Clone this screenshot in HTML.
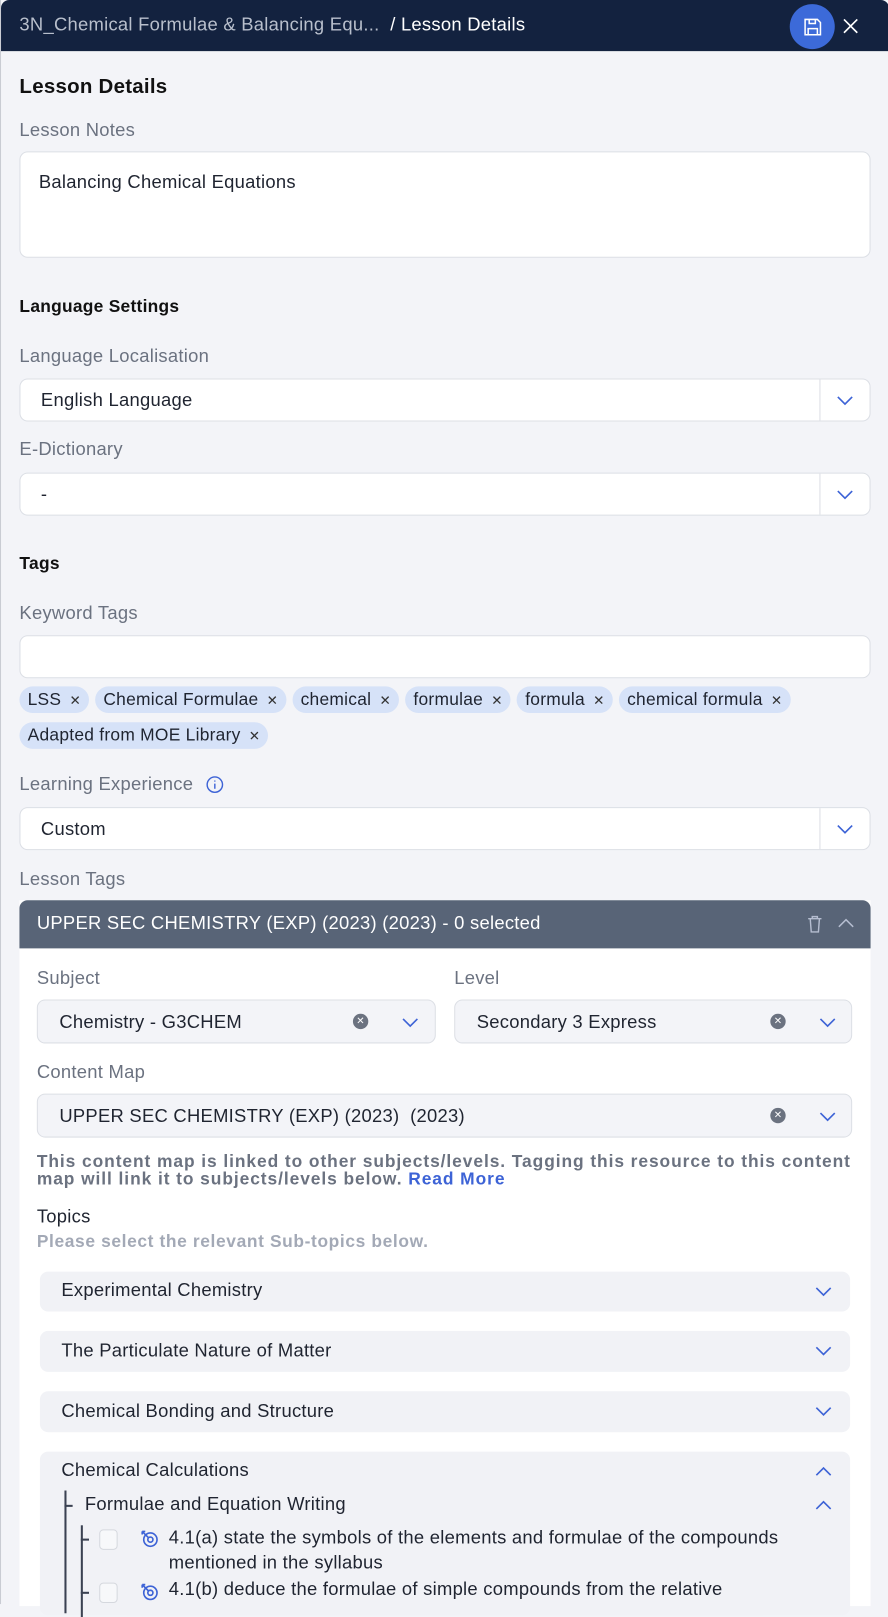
<!DOCTYPE html>
<html><head><meta charset="utf-8"><style>
*{box-sizing:border-box;margin:0;padding:0}
html,body{width:888px;height:1604px;overflow:hidden;background:#f3f4f8}
#w{position:absolute;left:0;top:0;width:868px;height:1568px;transform:scale(1.023);transform-origin:0 0;font-family:"Liberation Sans",sans-serif;color:#1f2430;background:#f3f4f8;border-left:1px solid #c9ccd3;letter-spacing:0.25px}
.a{position:absolute;white-space:nowrap}
.lbl{font-size:18px;color:#6b7280}
.b{font-weight:bold;font-size:17px;color:#111}
.box{position:absolute;background:#fff;border:1px solid #dcdfe5;border-radius:8px}
.sel{position:absolute;background:#fff;border:1px solid #dcdfe5;border-radius:8px;height:42px;font-size:18px}
.sel span{position:absolute;left:20px;top:10px}
.sel .dv{position:absolute;right:48px;top:0;bottom:0;width:1px;background:#dcdfe5}
.chev{position:absolute;width:18px;height:10px}
.chip{display:inline-block;background:#d6e2f8;border-radius:13px;height:26px;line-height:26px;padding:0 8px;font-size:17px;color:#1f2430;margin-right:6px;margin-bottom:9px}
.chip i{font-style:normal;font-size:13px;margin-left:8px;color:#333}
.ss{position:absolute;background:#f3f4f8;border:1px solid #dcdfe5;border-radius:8px;height:43px;font-size:18px}
.ss span{position:absolute;left:21px;top:11px}
.clr{position:absolute;width:15px;height:15px;border-radius:50%;background:#6b7280;color:#fff;font-size:10px;line-height:15px;text-align:center;top:13px;letter-spacing:0}
.topic{position:absolute;left:38px;width:792px;background:#f1f2f6;border-radius:8px;font-size:18px}
</style></head><body><div id="w">
<div class="a" style="left:0;top:0;width:868px;height:50px;background:#13223f;border-radius:8px 8px 0 0"></div>
<div class="a" style="left:18px;top:14px;font-size:18px;color:#b8bfcc">3N_Chemical Formulae &amp; Balancing Equ... <span style="color:#fff">&nbsp;/ Lesson Details</span></div>
<div class="a" style="left:771px;top:4px;width:44px;height:44px;border-radius:50%;background:#3c6ad9"></div>
<svg class="a" style="left:783px;top:16px" width="21" height="21" viewBox="0 0 21 21" fill="none" stroke="#fff" stroke-width="1.5"><path d="M3 3h12l3 3v12H3z"/><path d="M7 3v4h6V3M6 18v-6h9v6"/></svg>
<svg class="a" style="left:822px;top:17px" width="17" height="17" stroke="#fff" stroke-width="1.6"><path d="M2 2l13 13M15 2L2 15"/></svg>

<div class="a" style="left:18px;top:74px;font-size:20px;font-weight:bold;color:#111">Lesson Details</div>
<div class="a lbl" style="left:18px;top:117px">Lesson Notes</div>
<div class="box" style="left:18px;top:148px;width:832px;height:104px"></div>
<div class="a" style="left:37px;top:168px;font-size:18px">Balancing Chemical Equations</div>

<div class="a b" style="left:18px;top:290px">Language Settings</div>
<div class="a lbl" style="left:18px;top:338px">Language Localisation</div>
<div class="sel" style="left:18px;top:370px;width:832px"><span>English Language</span><div class="dv"></div><svg class="chev" style="right:15px;top:16px" viewBox="0 0 18 10" fill="none" stroke="#3d63d6" stroke-width="1.6"><path d="M2 1l7 7 7-7"/></svg></div>
<div class="a lbl" style="left:18px;top:429px">E-Dictionary</div>
<div class="sel" style="left:18px;top:462px;width:832px"><span>-</span><div class="dv"></div><svg class="chev" style="right:15px;top:16px" viewBox="0 0 18 10" fill="none" stroke="#3d63d6" stroke-width="1.6"><path d="M2 1l7 7 7-7"/></svg></div>

<div class="a b" style="left:18px;top:541px">Tags</div>
<div class="a lbl" style="left:18px;top:589px">Keyword Tags</div>
<div class="box" style="left:18px;top:621px;width:832px;height:42px"></div>
<div class="a" style="left:18px;top:671px;width:830px;white-space:normal">
<span class="chip">LSS<i>✕</i></span><span class="chip">Chemical Formulae<i>✕</i></span><span class="chip">chemical<i>✕</i></span><span class="chip">formulae<i>✕</i></span><span class="chip">formula<i>✕</i></span><span class="chip">chemical formula<i>✕</i></span><br><span class="chip">Adapted from MOE Library<i>✕</i></span></div>

<div class="a lbl" style="left:18px;top:756px">Learning Experience</div>
<svg class="a" style="left:200px;top:758px" width="18" height="18" fill="none" stroke="#3d63d6" stroke-width="1.4"><circle cx="9" cy="9" r="7.5"/><path d="M9 8v5M9 5v1"/></svg>
<div class="sel" style="left:18px;top:789px;width:832px"><span>Custom</span><div class="dv"></div><svg class="chev" style="right:15px;top:16px" viewBox="0 0 18 10" fill="none" stroke="#3d63d6" stroke-width="1.6"><path d="M2 1l7 7 7-7"/></svg></div>
<div class="a lbl" style="left:18px;top:849px">Lesson Tags</div>

<div class="a" style="left:18px;top:880px;width:832px;height:690px;background:#fff"></div>
<div class="a" style="left:18px;top:880px;width:832px;height:47px;background:#586477;border-radius:8px 8px 0 0"></div>
<div class="a" style="left:35px;top:892px;font-size:18px;color:#fff">UPPER SEC CHEMISTRY (EXP) (2023) (2023) - 0 selected</div>
<svg class="a" style="left:787px;top:894px" width="17" height="19" fill="none" stroke="#b5bdd0" stroke-width="1.4"><path d="M2 4h13M6 4V2h5v2M4 4l1 13h7l1-13"/></svg>
<svg class="a" style="left:818px;top:897px" width="16" height="10" fill="none" stroke="#b5bdd0" stroke-width="1.5"><path d="M1 9l7-7 7 7"/></svg>

<div class="a lbl" style="left:35px;top:946px">Subject</div>
<div class="a lbl" style="left:443px;top:946px">Level</div>
<div class="ss" style="left:35px;top:977px;width:390px"><span>Chemistry - G3CHEM</span><div class="clr" style="left:308px">✕</div><svg class="chev" style="left:355px;top:17px" viewBox="0 0 18 10" fill="none" stroke="#3d63d6" stroke-width="1.6"><path d="M2 1l7 7 7-7"/></svg></div>
<div class="ss" style="left:443px;top:977px;width:389px"><span>Secondary 3 Express</span><div class="clr" style="left:308px">✕</div><svg class="chev" style="left:355px;top:17px" viewBox="0 0 18 10" fill="none" stroke="#3d63d6" stroke-width="1.6"><path d="M2 1l7 7 7-7"/></svg></div>
<div class="a lbl" style="left:35px;top:1038px">Content Map</div>
<div class="ss" style="left:35px;top:1069px;width:797px"><span>UPPER SEC CHEMISTRY (EXP) (2023)&nbsp; (2023)</span><div class="clr" style="left:716px">✕</div><svg class="chev" style="left:763px;top:17px" viewBox="0 0 18 10" fill="none" stroke="#3d63d6" stroke-width="1.6"><path d="M2 1l7 7 7-7"/></svg></div>
<div class="a" style="left:35px;top:1127px;font-size:17px;font-weight:bold;color:#6b7280;line-height:17px;letter-spacing:0.9px">This content map is linked to other subjects/levels. Tagging this resource to this content<br>map will link it to subjects/levels below. <span style="color:#3d63d6">Read More</span></div>
<div class="a" style="left:35px;top:1179px;font-size:18px;color:#1f2430">Topics</div>
<div class="a" style="left:35px;top:1204px;font-size:17px;font-weight:bold;color:#a3a9b6;letter-spacing:0.6px">Please select the relevant Sub-topics below.</div>

<div class="topic" style="top:1243px;height:39px"><span class="a" style="left:21px;top:8px">Experimental Chemistry</span><svg class="chev" style="left:757px;top:15px" viewBox="0 0 18 10" fill="none" stroke="#3d63d6" stroke-width="1.6"><path d="M2 1l7 7 7-7"/></svg></div>
<div class="topic" style="top:1301px;height:40px"><span class="a" style="left:21px;top:9px">The Particulate Nature of Matter</span><svg class="chev" style="left:757px;top:15px" viewBox="0 0 18 10" fill="none" stroke="#3d63d6" stroke-width="1.6"><path d="M2 1l7 7 7-7"/></svg></div>
<div class="topic" style="top:1360px;height:40px"><span class="a" style="left:21px;top:9px">Chemical Bonding and Structure</span><svg class="chev" style="left:757px;top:15px" viewBox="0 0 18 10" fill="none" stroke="#3d63d6" stroke-width="1.6"><path d="M2 1l7 7 7-7"/></svg></div>
<div class="topic" style="top:1419px;height:160px">
<span class="a" style="left:21px;top:8px">Chemical Calculations</span><svg class="chev" style="left:757px;top:14px" viewBox="0 0 18 10" fill="none" stroke="#3d63d6" stroke-width="1.6"><path d="M2 9l7-7 7 7"/></svg>
<div class="a" style="left:24px;top:38px;width:2px;height:120px;background:#3b4252"></div>
<div class="a" style="left:24px;top:52px;width:8px;height:2px;background:#3b4252"></div>
<span class="a" style="left:44px;top:41px">Formulae and Equation Writing</span><svg class="chev" style="left:757px;top:47px" viewBox="0 0 18 10" fill="none" stroke="#3d63d6" stroke-width="1.6"><path d="M2 9l7-7 7 7"/></svg>
<div class="a" style="left:40px;top:72px;width:2px;height:90px;background:#3b4252"></div>
<div class="a" style="left:40px;top:85px;width:8px;height:2px;background:#3b4252"></div>
<div class="a" style="left:40px;top:137px;width:8px;height:2px;background:#3b4252"></div>
<div class="a" style="left:58px;top:76px;width:18px;height:20px;border:1px solid #d5d8de;border-radius:4px;background:#f7f8fa"></div>
<div class="a" style="left:58px;top:128px;width:18px;height:20px;border:1px solid #d5d8de;border-radius:4px;background:#f7f8fa"></div>
<svg class="a" style="left:98px;top:76px" width="18" height="18" fill="none" stroke="#3d63d6" stroke-width="1.6"><circle cx="10" cy="10" r="6.5"/><circle cx="10" cy="10" r="2.5"/><path d="M2 2l6 6M2 2v3M2 2h3"/></svg>
<svg class="a" style="left:98px;top:128px" width="18" height="18" fill="none" stroke="#3d63d6" stroke-width="1.6"><circle cx="10" cy="10" r="6.5"/><circle cx="10" cy="10" r="2.5"/><path d="M2 2l6 6M2 2v3M2 2h3"/></svg>
<div class="a" style="left:126px;top:72px;font-size:18px;line-height:24px">4.1(a) state the symbols of the elements and formulae of the compounds<br>mentioned in the syllabus</div>
<div class="a" style="left:126px;top:124px;font-size:18px">4.1(b) deduce the formulae of simple compounds from the relative</div>
</div>
</div></body></html>
